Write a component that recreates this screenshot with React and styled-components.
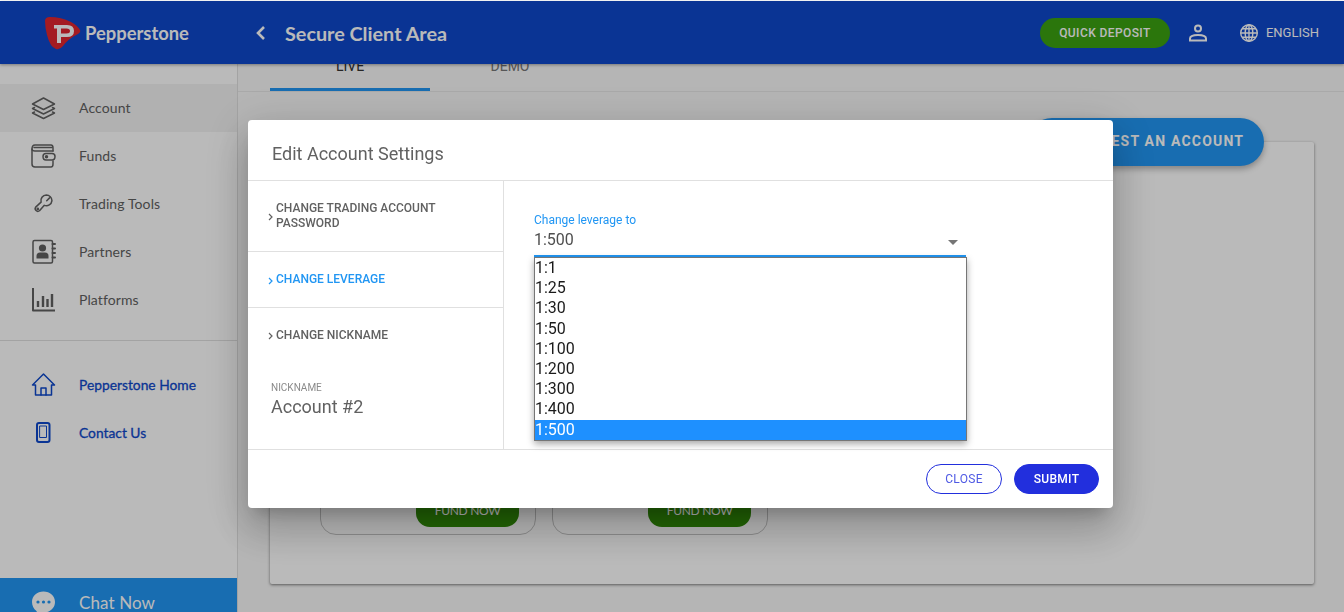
import React from "react";
import styled, { createGlobalStyle } from "styled-components";

const GlobalStyle = createGlobalStyle`
  html, body {
    margin: 0;
    padding: 0;
    height: 100%;
    overflow: hidden;
    background: #fff;
    font-family: Roboto, "Liberation Sans", sans-serif;
  }
  * { box-sizing: border-box; }
`;

const NAV_FONT = `Lato, "Open Sans", sans-serif`;

const Page = styled.div`
  width: 1344px;
  height: 612px;
  padding-top: 1px;
  display: flex;
  flex-direction: column;
  overflow: hidden;
`;

const Header = styled.header`
  position: relative;
  z-index: 2;
  flex: 0 0 63px;
  display: flex;
  align-items: center;
  background: #0e48cb;
  box-shadow: 0 1px 3px rgba(0, 0, 0, 0.35);
  color: #fff;
`;

const Brand = styled.div`
  width: 237px;
  padding-left: 44px;
  display: flex;
  align-items: center;
  gap: 4px;
  font: 700 18.4px ${NAV_FONT};
`;

const BackArrow = styled.svg`
  width: 12px;
  height: 16px;
  margin: 0 18px 0 18px;
`;

const PageTitle = styled.div`
  font: 700 19.8px ${NAV_FONT};
  flex: 1;
`;

const DepositButton = styled.div`
  width: 130px;
  height: 30px;
  border-radius: 15px;
  background: #3ba211;
  font: 500 12px/30px Roboto, sans-serif;
  letter-spacing: 0.4px;
  text-align: center;
`;

const HeaderIcon = styled.svg`
  width: 20px;
  height: 20px;
  margin-left: ${(p) => p.$left}px;
`;

const Lang = styled.div`
  margin: 0 25px 0 7px;
  font: 400 13px Roboto, sans-serif;
`;

const Body = styled.div`
  flex: 1;
  display: flex;
  min-height: 0;
`;

const Sidebar = styled.nav`
  flex: 0 0 238px;
  display: flex;
  flex-direction: column;
  padding-top: 20px;
  background: #fff;
  border-right: 1px solid #e0e0e0;
  overflow: hidden;
`;

const NavItem = styled.div`
  flex: 0 0 48px;
  display: flex;
  align-items: center;
  padding: 0 0 2px 31px;
  gap: 23px;
  background: ${(p) => (p.$active ? "#f3f3f3" : "transparent")};
  color: ${(p) => (p.$link ? "#0e48cb" : "#616161")};
  font: 400 ${(p) => (p.$link ? 13.8 : 14)}px ${NAV_FONT};
  letter-spacing: ${(p) => (p.$link ? 0 : 0.1)}px;
  -webkit-text-stroke: ${(p) => (p.$link ? 0.3 : 0)}px;
`;

const NavIcon = styled.svg`
  width: 25px;
  height: 25px;
  flex: none;
  fill: none;
  stroke: currentColor;
  stroke-width: 1.5;
  stroke-linejoin: round;
  stroke-linecap: round;
`;

const Divider = styled.div`
  margin: 16px 0 20px;
  border-top: 1px solid #e0e0e0;
`;

const ChatBar = styled(NavItem)`
  margin-top: auto;
  margin-bottom: -14px;
  padding-bottom: 0;
  background: #2196f3;
  color: #fff;
  font: 400 17px ${NAV_FONT};
`;

const Main = styled.main`
  flex: 1;
  min-width: 0;
  background: #f8f8f8;
  display: flex;
  flex-direction: column;
`;

const TabBar = styled.div`
  flex: 0 0 28px;
  display: flex;
  padding-left: 32px;
  border-bottom: 1px solid #e8e8e8;
`;

const Tab = styled.div`
  width: 160px;
  height: 27px;
  padding-bottom: ${(p) => (p.$active ? 15 : 18)}px;
  display: flex;
  align-items: flex-end;
  justify-content: center;
  font: 400 14px/14px Roboto, sans-serif;
  color: ${(p) => (p.$active ? "#333" : "#777")};
  border-bottom: ${(p) => (p.$active ? "3px solid #2196f3" : "none")};
`;

const ActionRow = styled.div`
  position: relative;
  z-index: 1;
  display: flex;
  justify-content: flex-end;
  padding: 26px 80px 0 0;
`;

const RequestButton = styled.div`
  width: 236px;
  height: 48px;
  border-radius: 24px;
  padding-left: 43px;
  background: #2196f3;
  color: #fff;
  font: 700 14px/46px Roboto, sans-serif;
  letter-spacing: 1.2px;
  white-space: nowrap;
  box-shadow: 0 3px 6px rgba(0, 0, 0, 0.3);
`;

const Card = styled.section`
  height: 442px;
  margin: -24px 30px 0 32px;
  padding: 0 50px 49px;
  display: flex;
  align-items: flex-end;
  gap: 16px;
  background: #fff;
  border-radius: 2px;
  box-shadow: 0 1px 3px rgba(0, 0, 0, 0.5);
`;

const FundCard = styled.div`
  width: 216px;
  height: 120px;
  padding: 0 0 7px 95px;
  display: flex;
  align-items: flex-end;
  border: 1px solid #c4c4c4;
  border-radius: 16px;
`;

const FundButton = styled.div`
  width: 103px;
  height: 40px;
  padding-top: 15px;
  border-radius: 14px;
  background: #2f8c06;
  color: #fff;
  font: 400 12px/18px ${NAV_FONT};
  letter-spacing: -0.3px;
  text-align: center;
`;

const Overlay = styled.div`
  position: fixed;
  inset: 1px 0 0;
  z-index: 5;
  padding: 119px 0 0 248px;
  background: rgba(0, 0, 0, 0.27);
`;

const Modal = styled.div`
  position: relative;
  width: 865px;
  height: 388px;
  display: flex;
  flex-direction: column;
  background: #fff;
  border-radius: 4px;
  box-shadow: 0 11px 15px -7px rgba(0, 0, 0, 0.2), 0 24px 38px 3px rgba(0, 0, 0, 0.14),
    0 9px 46px 8px rgba(0, 0, 0, 0.12);
`;

const ModalTitle = styled.div`
  flex: 0 0 61px;
  padding: 24px 0 0 24px;
  border-bottom: 1px solid #e0e0e0;
  font: 400 18px/20px Roboto, sans-serif;
  color: #616161;
`;

const ModalBody = styled.div`
  flex: 0 0 268px;
  display: flex;
`;

const SideMenu = styled.div`
  flex: 0 0 256px;
  border-right: 1px solid #e0e0e0;
`;

const MenuRow = styled.div`
  height: ${(p) => p.$height}px;
  display: flex;
  align-items: center;
  padding-left: 20px;
  gap: 3px;
  border-bottom: ${(p) => (p.$last ? "none" : "1px solid #e0e0e0")};
  color: ${(p) => (p.$active ? "#2196f3" : "#616161")};
  font: 500 12px/15px Roboto, sans-serif;
`;

const Chevron = styled.svg`
  width: 5px;
  height: 8px;
  flex: none;
  margin-top: 2px;
`;

const Nickname = styled.div`
  padding: 20px 0 0 23px;
`;

const NicknameLabel = styled.div`
  font: 400 10px/12px Roboto, sans-serif;
  color: #8a8a8a;
`;

const NicknameValue = styled.div`
  margin-top: 1px;
  font: 400 18px/24px Roboto, sans-serif;
  color: #616161;
`;

const Form = styled.div`
  position: relative;
  flex: 1;
  padding: 32px 0 0 30px;
`;

const FieldLabel = styled.div`
  font: 400 12px/14px Roboto, sans-serif;
  color: #2196f3;
`;

const SelectBox = styled.div`
  width: 432px;
  height: 30px;
  display: flex;
  align-items: center;
  justify-content: space-between;
  padding: 0 8px 2px 0;
  border-bottom: 2px solid #2196f3;
  font: 400 16px/20px Roboto, sans-serif;
  color: #4f4f4f;
`;

const Caret = styled.span`
  width: 0;
  height: 0;
  margin-top: 4px;
  border-left: 5px solid transparent;
  border-right: 5px solid transparent;
  border-top: 5px solid #757575;
`;

const OptionList = styled.ul`
  position: absolute;
  left: 30px;
  top: 76px;
  width: 433px;
  height: 184px;
  margin: 0;
  padding: 0;
  list-style: none;
  background: #fff;
  border: 1px solid #767676;
  box-shadow: 0 3px 7px rgba(0, 0, 0, 0.35);
`;

const Option = styled.li`
  height: 20.2px;
  font: 400 16px/20px Roboto, sans-serif;
  color: ${(p) => (p.$selected ? "#fff" : "#1a1a1a")};
  background: ${(p) => (p.$selected ? "#1e90ff" : "transparent")};
`;

const ModalFooter = styled.div`
  flex: 1;
  display: flex;
  justify-content: flex-end;
  align-items: flex-start;
  gap: 12px;
  padding: 14px 14px 0 0;
  border-top: 1px solid #e0e0e0;
`;

const FooterButton = styled.div`
  width: ${(p) => (p.$primary ? 85 : 76)}px;
  height: 30px;
  border-radius: 15px;
  border: 1px solid #222fdd;
  background: ${(p) => (p.$primary ? "#222fdd" : "#fff")};
  color: ${(p) => (p.$primary ? "#fff" : "#4f5ae4")};
  font: ${(p) => (p.$primary ? 500 : 400)} 12px/28px Roboto, sans-serif;
  letter-spacing: 0.3px;
  text-align: center;
`;

const LEVERAGE = ["1:1", "1:25", "1:30", "1:50", "1:100", "1:200", "1:300", "1:400", "1:500"];

const Logo = () => (
  <svg width="37" height="34" viewBox="0 0 37 34">
    <path d="M1 5 Q1 1 6 1 Q17 1 27 6 Q33 9 36 14 Q37 16 34 18 Q24 23 19 30 Q16 34 12 33 Q6 31 3 19 Q1 11 1 5Z" fill="#e1252f" />
    <path d="M10 9 H23 Q30 9 30 15 Q30 21 23 21 H17 V27 H13 V12.5 H10Z M17 12.5 V17.5 H22.5 Q26 17.5 26 15 Q26 12.5 22.5 12.5Z" fill="#fff" fillRule="evenodd" />
  </svg>
);

const LayersIcon = () => (
  <NavIcon viewBox="0 0 25 25">
    <path d="M12.5 3 L23.5 9 L12.5 14.5 L1.5 9Z" />
    <path d="M3.5 12.5 L1.5 13.5 L12.5 19 L23.5 13.5 L21.5 12.5" />
    <path d="M3.5 17 L1.5 18 L12.5 23.5 L23.5 18 L21.5 17" />
  </NavIcon>
);

const WalletIcon = () => (
  <NavIcon viewBox="0 0 25 25">
    <path d="M22 8 V5 Q22 2 20 2 H4 Q1 2 1 6 V21 Q1 24 4 24 H20 Q22 24 22 21 V18" />
    <path d="M1 6 Q1 8 4 8 H22" />
    <path d="M3 4.5 H21" />
    <path d="M15 10.5 H21 Q24 10.5 24 13.5 Q24 17 21 17 H15 Q12 17 12 13.5 Q12 10.5 15 10.5Z" />
    <circle cx="15.5" cy="13.8" r="1" fill="currentColor" />
  </NavIcon>
);

const WrenchIcon = () => (
  <NavIcon viewBox="-3 -3 31 31" style={{ strokeWidth: 1.9 }}>
    <path d="M16 2 A7 7 0 0 1 23 9 A7 7 0 0 1 13.5 14.8 L7.5 21.5 A3.3 3.3 0 0 1 2.8 17 L9.5 10.8 A7 7 0 0 1 16 2Z" />
    <path d="M16.5 9 L20 5.5" />
    <circle cx="5.4" cy="19.2" r="0.7" />
  </NavIcon>
);

const ContactsIcon = () => (
  <NavIcon viewBox="0 0 25 25">
    <rect x="2" y="1.5" width="19.5" height="22.5" rx="1.5" />
    <circle cx="11.5" cy="9" r="3.6" fill="currentColor" stroke="none" />
    <path d="M5.5 19.5 V17 Q5.5 13.5 9 13.5 H14 Q17.5 13.5 17.5 17 V19.5Z" fill="currentColor" stroke="none" />
    <path d="M21.5 5 H24 M21.5 9.5 H24 M21.5 14 H24 M21.5 18.5 H24" strokeWidth="2" />
  </NavIcon>
);

const ChartIcon = () => (
  <NavIcon viewBox="0 0 25 25">
    <path d="M2 1 V23.5 H24" strokeWidth="2" strokeLinecap="butt" />
    <path d="M7 20 V14 M12 20 V9 M16.5 20 V12 M21 20 V7" strokeWidth="2.4" strokeLinecap="butt" />
  </NavIcon>
);

const HomeIcon = () => (
  <NavIcon viewBox="0 0 25 25">
    <path d="M1.5 13 L12.5 2 L23.5 13 H20.5 V23 H4.5 V13Z" />
    <path d="M10 23 V16 H15 V23" />
  </NavIcon>
);

const PhoneIcon = () => (
  <NavIcon viewBox="0 0 25 25">
    <rect x="6" y="3" width="12.5" height="19" rx="2" strokeWidth="2" />
    <rect x="9" y="6" width="6.5" height="11.5" strokeWidth="1" />
  </NavIcon>
);

const ChatIcon = () => (
  <NavIcon viewBox="0 0 25 25" style={{ stroke: "none" }}>
    <path d="M12.5 1.5 C19 1.5 24 6 24 12 C24 18 19 22.5 12.5 22.5 H8 Q8 25 5 25 Q6.5 23 5.5 21 C2.5 19 1 15.5 1 12 C1 6 6 1.5 12.5 1.5Z" fill="currentColor" />
    <circle cx="7" cy="12" r="1.6" fill="#2196f3" />
    <circle cx="12.5" cy="12" r="1.6" fill="#2196f3" />
    <circle cx="18" cy="12" r="1.6" fill="#2196f3" />
  </NavIcon>
);

const MenuEntry = ({ height, active, last, children }) => (
  <MenuRow $height={height} $active={active} $last={last}>
    <Chevron viewBox="0 0 5 8">
      <path d="M1 1 L4 4 L1 7" fill="none" stroke="currentColor" strokeWidth="1.2" />
    </Chevron>
    <span>{children}</span>
  </MenuRow>
);

const App = () => {
  return (
    <Page>
      <GlobalStyle />
      <Header>
        <Brand>
          <Logo />
          <span>Pepperstone</span>
        </Brand>
        <BackArrow viewBox="0 0 12 16">
          <path d="M9 2 L3 8 L9 14" fill="none" stroke="#fff" strokeWidth="2.6" />
        </BackArrow>
        <PageTitle>Secure Client Area</PageTitle>
        <DepositButton>QUICK DEPOSIT</DepositButton>
        <HeaderIcon $left={18} viewBox="0 0 20 20" fill="none" stroke="#fff" strokeWidth="2">
          <circle cx="10" cy="5.5" r="3" />
          <path d="M2 17.5 V15.5 Q2 12 10 12 Q18 12 18 15.5 V17.5Z" />
        </HeaderIcon>
        <HeaderIcon $left={31} viewBox="0 0 20 20" fill="none" stroke="#fff" strokeWidth="1.4">
          <circle cx="10" cy="10" r="8.3" />
          <ellipse cx="10" cy="10" rx="3.8" ry="8.3" />
          <path d="M10 1.7 V18.3 M1.7 10 H18.3 M3 5.8 H17 M3 14.2 H17" />
        </HeaderIcon>
        <Lang>ENGLISH</Lang>
      </Header>
      <Body>
        <Sidebar>
          <NavItem $active>
            <LayersIcon />
            Account
          </NavItem>
          <NavItem>
            <WalletIcon />
            Funds
          </NavItem>
          <NavItem>
            <WrenchIcon />
            Trading Tools
          </NavItem>
          <NavItem>
            <ContactsIcon />
            Partners
          </NavItem>
          <NavItem>
            <ChartIcon />
            Platforms
          </NavItem>
          <Divider />
          <NavItem $link>
            <HomeIcon />
            Pepperstone Home
          </NavItem>
          <NavItem $link>
            <PhoneIcon />
            Contact Us
          </NavItem>
          <ChatBar>
            <ChatIcon />
            Chat Now
          </ChatBar>
        </Sidebar>
        <Main>
          <TabBar>
            <Tab $active>LIVE</Tab>
            <Tab>DEMO</Tab>
          </TabBar>
          <ActionRow>
            <RequestButton>REQUEST AN ACCOUNT</RequestButton>
          </ActionRow>
          <Card>
            <FundCard>
              <FundButton>FUND NOW</FundButton>
            </FundCard>
            <FundCard>
              <FundButton>FUND NOW</FundButton>
            </FundCard>
          </Card>
        </Main>
      </Body>
      <Overlay>
        <Modal>
          <ModalTitle>Edit Account Settings</ModalTitle>
          <ModalBody>
            <SideMenu>
              <MenuEntry height={71}>
                CHANGE TRADING ACCOUNT
                <br />
                PASSWORD
              </MenuEntry>
              <MenuEntry height={56} active>
                CHANGE LEVERAGE
              </MenuEntry>
              <MenuEntry height={54} last>
                CHANGE NICKNAME
              </MenuEntry>
              <Nickname>
                <NicknameLabel>NICKNAME</NicknameLabel>
                <NicknameValue>Account #2</NicknameValue>
              </Nickname>
            </SideMenu>
            <Form>
              <FieldLabel>Change leverage to</FieldLabel>
              <SelectBox>
                <span>1:500</span>
                <Caret />
              </SelectBox>
              <OptionList>
                {LEVERAGE.map((item) => (
                  <Option key={item} $selected={item === "1:500"}>
                    {item}
                  </Option>
                ))}
              </OptionList>
            </Form>
          </ModalBody>
          <ModalFooter>
            <FooterButton>CLOSE</FooterButton>
            <FooterButton $primary>SUBMIT</FooterButton>
          </ModalFooter>
        </Modal>
      </Overlay>
    </Page>
  );
};

export default App;
